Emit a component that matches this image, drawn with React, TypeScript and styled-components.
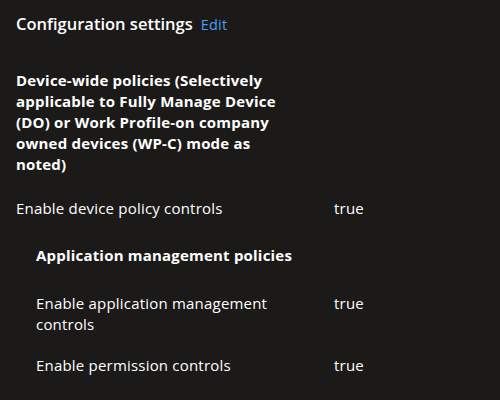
import React from "react";
import styled, { createGlobalStyle } from "styled-components";

const Global = createGlobalStyle`
  html, body { margin: 0; padding: 0; background: #1b1a19; }
  body { font-family: "Open Sans", "Noto Sans", sans-serif; color: #ffffff; }
  * { box-sizing: border-box; }
`;

const Page = styled.div`
  width: 500px;
  height: 400px;
  overflow: hidden;
  background: #1b1a19;
  padding: 12px 16px 0 16px;
`;

const TitleRow = styled.div`
  display: flex;
  align-items: baseline;
  gap: 8px;
`;

const Title = styled.h2`
  margin: 0;
  font-size: 16.5px;
  line-height: 24px;
  font-weight: 600;
  color: #ffffff;
`;

const EditLink = styled.a`
  font-size: 14.5px;
  letter-spacing: 0.2px;
  color: #479ef5;
  text-decoration: none;
  cursor: pointer;
`;

const Heading = styled.div<{ $indent?: number; $top: number }>`
  margin: ${(p) => p.$top}px 0 0 ${(p) => p.$indent ?? 0}px;
  max-width: ${(p) => 284 - (p.$indent ?? 0)}px;
  font-size: 15px;
  letter-spacing: 0.2px;
  line-height: 21px;
  font-weight: 700;
  color: #ffffff;
`;

const Row = styled.div<{ $indent?: number; $top: number }>`
  display: grid;
  grid-template-columns: ${(p) => 298 - (p.$indent ?? 0)}px 1fr;
  column-gap: 20px;
  margin: ${(p) => p.$top}px 0 0 ${(p) => p.$indent ?? 0}px;
  font-size: 15px;
  letter-spacing: 0.2px;
  line-height: 21px;
  color: #ffffff;
`;

const Label = styled.div``;
const Value = styled.div``;

type Item =
  | { kind: "heading"; text: string; indent?: number; top: number }
  | { kind: "row"; label: string; value: string; indent?: number; top: number };

const items: Item[] = [
  {
    kind: "heading",
    text: "Device-wide policies (Selectively applicable to Fully Manage Device (DO) or Work Profile-on company owned devices (WP-C) mode as noted)",
    top: 34,
  },
  { kind: "row", label: "Enable device policy controls", value: "true", top: 23 },
  { kind: "heading", text: "Application management policies", indent: 20, top: 26 },
  { kind: "row", label: "Enable application management controls", value: "true", indent: 20, top: 27 },
  { kind: "row", label: "Enable permission controls", value: "true", indent: 20, top: 20 },
];

export default function App() {
  return (
    <>
      <Global />
      <Page>
        <TitleRow>
          <Title>Configuration settings</Title>
          <EditLink>Edit</EditLink>
        </TitleRow>
        {items.map((it, i) =>
          it.kind === "heading" ? (
            <Heading key={i} $indent={it.indent} $top={it.top}>
              {it.text}
            </Heading>
          ) : (
            <Row key={i} $indent={it.indent} $top={it.top}>
              <Label>{it.label}</Label>
              <Value>{it.value}</Value>
            </Row>
          )
        )}
      </Page>
    </>
  );
}
